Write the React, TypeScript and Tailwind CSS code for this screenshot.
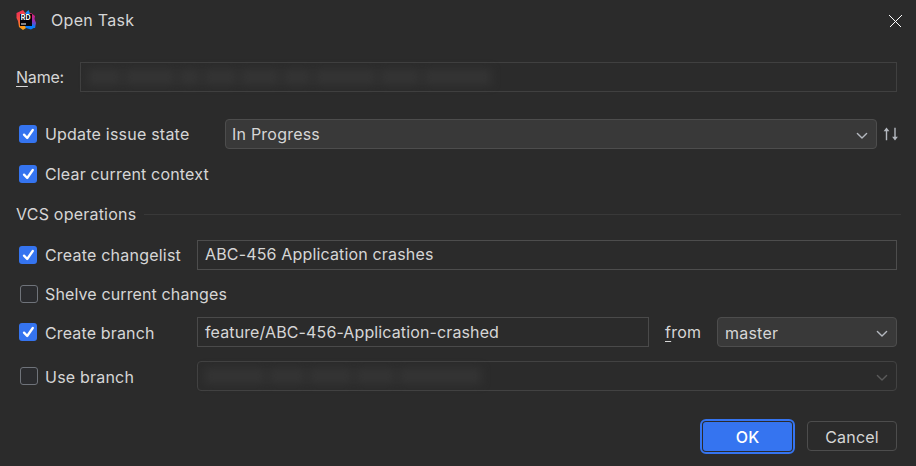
import type { ReactNode } from "react";

function Check({ checked = false }: { checked?: boolean }) {
  return checked ? (
    <span className="flex h-[18px] w-[18px] shrink-0 items-center justify-center rounded-[3px] bg-[#3574f0]">
      <svg width="18" height="18" viewBox="0 0 18 18" fill="none">
        <path d="M5 9.6 L8.2 13 L13.8 5" stroke="#fff" strokeWidth="2.3" strokeLinecap="round" strokeLinejoin="round" />
      </svg>
    </span>
  ) : (
    <span className="ml-[0.2px] h-[18px] w-[18px] shrink-0 rounded-[3px] border border-[#6f737a] bg-[#2b2c2f]" />
  );
}

function Option({ checked, children }: { checked?: boolean; children: ReactNode }) {
  return (
    <label className="flex items-center gap-[7.5px] pl-[3.4px]">
      <Check checked={checked} />
      {children}
    </label>
  );
}

function Chevron({ color }: { color: string }) {
  return (
    <svg width="12" height="8" viewBox="0 0 12 8" fill="none" className="mt-[3px] shrink-0">
      <path d="M1.4 1.5 L6 6 L10.6 1.5" stroke={color} strokeWidth="1.4" strokeLinecap="round" strokeLinejoin="round" />
    </svg>
  );
}

function Redacted({ widths }: { widths: number[] }) {
  return (
    <span className="flex items-center gap-[4px] blur-[4px]">
      {widths.map((w, i) => (
        <span key={i} className="h-[16px] bg-[#343434]" style={{ width: w }} />
      ))}
    </span>
  );
}

function Logo() {
  return (
    <svg width="20" height="20" viewBox="0 0 20 20" className="shrink-0">
      <defs>
        <linearGradient id="warm" x1="0" y1="0" x2="0.3" y2="1">
          <stop offset="0" stopColor="#f0245f" />
          <stop offset="0.5" stopColor="#f2503f" />
          <stop offset="1" stopColor="#fda015" />
        </linearGradient>
        <linearGradient id="side" x1="0" y1="0" x2="0" y2="1">
          <stop offset="0" stopColor="#e01a68" />
          <stop offset="0.5" stopColor="#a02fb0" />
          <stop offset="1" stopColor="#087cfa" />
        </linearGradient>
      </defs>
      <path d="M10 4 L15 3 L19 6 L18.5 9 L20 13 L19 18 L13 18 L8 14 Z" fill="url(#side)" />
      <path d="M8 4 L12.5 0 L14.5 4.5 Z" fill="#1688f5" />
      <path d="M0.5 3 L7 0 L10 4 L9 14 L10 18 L7 20 L3 17 L2 11 L0.5 8 Z" fill="url(#warm)" />
      <path d="M9 16 L16 14 L19.5 17 L15 19.5 L10 18 Z" fill="#087cfa" />
      <rect x="4" y="4" width="12" height="12" fill="#050308" />
      <text x="4.8" y="10" fontSize="7" fontWeight="700" fill="#fff" letterSpacing="0" fontFamily="Inter, sans-serif">RD</text>
      <rect x="5" y="13.5" width="5" height="1" fill="#fff" />
    </svg>
  );
}

export default function App() {
  return (
    <main className="flex h-[466px] w-[916px] flex-col bg-[#2b2b2b] pl-[16px] pr-[19px] font-['Inter',sans-serif] text-[16px] leading-[20px] tracking-[0.22px] text-[#d6d6d6]">
      <header className="mr-[-5px] flex h-[40px] shrink-0 items-center">
        <Logo />
        <h1 className="ml-[15px] flex-1 tracking-[0.3px]">Open Task</h1>
        <svg width="13" height="13" viewBox="0 0 13 13" shapeRendering="crispEdges" className="mt-[2px]">
          <path d="M0.5 0.5 L12.5 12.5 M12.5 0.5 L0.5 12.5" stroke="#fff" strokeWidth="1" />
        </svg>
      </header>

      <div className="mt-[22px] flex h-[30px] shrink-0 items-center">
        <span className="w-[64px] tracking-[-0.2px]"><span className="underline underline-offset-[3px]">N</span>ame:</span>
        <div className="flex h-full flex-1 items-center border border-[#404040] px-[7px]">
          <Redacted widths={[33, 50, 21, 33, 38, 28, 61, 40, 67]} />
        </div>
      </div>

      <div className="mt-[27px] flex h-[30px] shrink-0 items-center">
        <div className="w-[209px] shrink-0"><Option checked><span>Update issue state</span></Option></div>
        <div className="flex h-full w-[652px] shrink-0 items-center justify-between rounded-[4px] border border-[#4d4d4d] bg-[#393939] pl-[6px] pr-[8px]">
          <span>In Progress</span>
          <Chevron color="#b4b8bf" />
        </div>
        <svg width="16" height="14" viewBox="0 0 16 14" className="ml-[5px] shrink-0">
          <path d="M4.5 3 V13.2 M13 0.8 V11" stroke="#b4b8bf" strokeWidth="1.4" />
          <path d="M4.5 0.6 L7.4 4.2 H1.6 Z M13 13.4 L15.9 9.8 H10.1 Z" fill="#b4b8bf" />
        </svg>
      </div>

      <div className="mt-[10px] flex h-[30px] shrink-0 items-center"><Option checked><span className="tracking-[0.18px]">Clear current context</span></Option></div>

      <div className="mr-[-4px] mt-[10px] flex h-[30px] shrink-0 items-center gap-[8px]">
        <span>VCS operations</span>
        <span className="h-px flex-1 bg-[#393939]" />
      </div>

      <div className="mt-[11px] flex h-[30px] shrink-0 items-center">
        <div className="w-[181px]"><Option checked><span>Create changelist</span></Option></div>
        <div className="flex h-full flex-1 items-center border border-[#4d4d4d] px-[7px] pb-[2px] tracking-[0.16px]">ABC-456 Application crashes</div>
      </div>

      <div className="mt-[9px] flex h-[30px] shrink-0 items-center"><Option><span className="tracking-[0.12px]">Shelve current changes</span></Option></div>

      <div className="mt-[8px] flex h-[30px] shrink-0 items-center">
        <div className="w-[181px]"><Option checked><span className="pt-[2px] tracking-[0.16px]">Create branch</span></Option></div>
        <div className="flex h-full w-[452px] items-center border border-[#4a4a4a] px-[7px] tracking-[0.12px]">feature/ABC-456-Application-crashed</div>
        <span className="ml-[16px] w-[52px]"><span className="underline underline-offset-[3px]">f</span>rom</span>
        <div className="flex h-full flex-1 items-center justify-between rounded-[4px] border border-[#4d4d4d] bg-[#393939] pl-[7px] pr-[8px]">
          <span className="pt-[2px]">master</span>
          <Chevron color="#b4b8bf" />
        </div>
      </div>

      <div className="mt-[14px] flex h-[30px] shrink-0 items-center">
        <div className="w-[181px]"><Option><span className="pt-[2px] tracking-[0.2px]">Use branch</span></Option></div>
        <div className="flex h-full flex-1 items-center justify-between rounded-[4px] border border-[#424242] pl-[7px] pr-[8px]">
          <Redacted widths={[60, 36, 43, 39, 82]} />
          <Chevron color="#5a5a5a" />
        </div>
      </div>

      <footer className="mt-[30px] flex h-[30px] shrink-0 items-center justify-end gap-[15px]">
        <button className="h-[29px] w-[89px] rounded-[3px] bg-[#3574f0] pt-[1px] font-medium text-white outline-2 outline-offset-1 outline-[#3574f0]">OK</button>
        <button className="h-[30px] w-[90px] rounded-[4px] border border-[#4d4d4d] pt-[2px] tracking-[0.2px]">Cancel</button>
      </footer>
    </main>
  );
}
